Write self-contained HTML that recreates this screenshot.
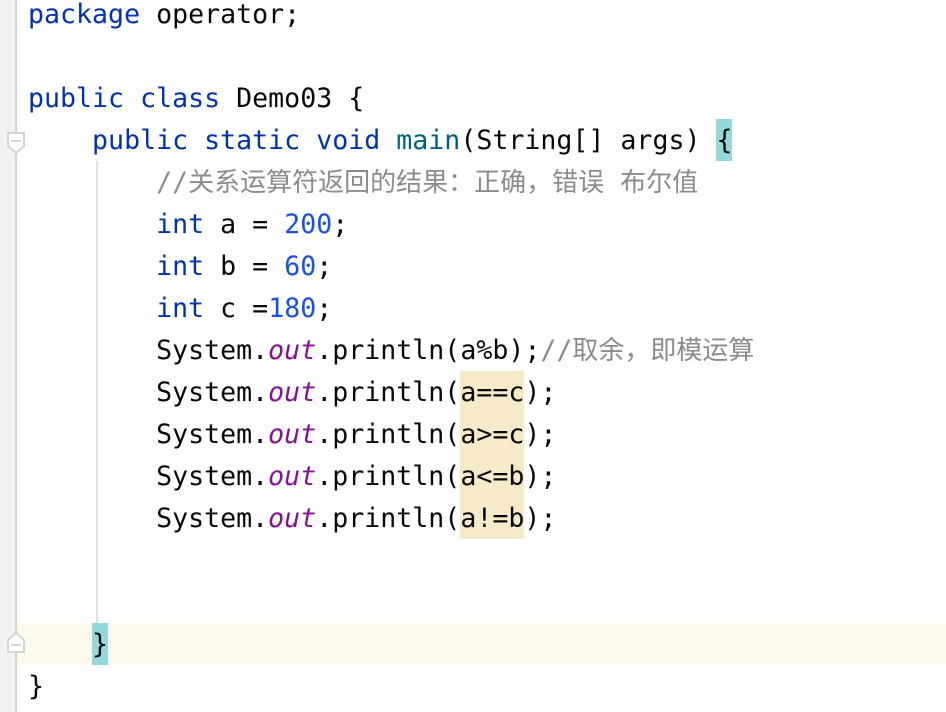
<!DOCTYPE html>
<html><head><meta charset="utf-8">
<style>
html,body{margin:0;padding:0;background:#fff}
#p{position:relative;width:946px;height:712px;overflow:hidden;background:#fff;font-family:"DejaVu Sans Mono","Liberation Mono","Noto Sans CJK SC",monospace;font-size:26.6px;color:#080808}
.a{position:absolute}
.l{position:absolute;left:28px;height:42px;line-height:42px;white-space:pre}
.k{color:#0033b3}.n{color:#1750eb}.m{color:#00627a}.f{color:#871094;font-style:italic}
.c{color:#8c8c8c}
.z{font-family:"Noto Sans CJK SC",sans-serif;font-size:26px;color:#8c8c8c}
</style></head><body><div id="p">
<div class="a" style="left:0;top:623px;width:946px;height:42px;background:#fcfaed"></div>
<div class="a" style="left:0;top:0;width:15px;height:712px;background:#f2f2f2"></div>
<div class="a" style="left:15px;top:0;width:2px;height:712px;background:#d4d4d4"></div>
<div class="a" style="left:96px;top:161px;width:2px;height:462px;background:#e2e2e2"></div>
<div class="a" style="left:716px;top:119px;width:16px;height:42px;background:#93d9d9"></div>
<div class="a" style="left:92px;top:623px;width:16px;height:42px;background:#93d9d9"></div>
<div class="a" style="left:460px;top:371px;width:64px;height:168px;background:#f6ebc8"></div>
<svg class="a" style="left:0;top:0" width="30" height="712">
<path d="M8 133H24V146L16 153L8 146Z" fill="#fff" stroke="#d4d4d4" stroke-width="2"/><path d="M11 141H21" stroke="#d4d4d4" stroke-width="2"/>
<path d="M16 633L24 640V652H8V640Z" fill="#fff" stroke="#d4d4d4" stroke-width="2"/><path d="M11 645H21" stroke="#d4d4d4" stroke-width="2"/>
</svg>
<div class="l" style="top:-6px"><span class="k">package</span> operator;</div>
<div class="l" style="top:78px"><span class="k">public class</span> Demo03 {</div>
<div class="l" style="top:120px">    <span class="k">public static void</span> <span class="m">main</span>(String[] args) {</div>
<div class="l" style="top:160px">        <span class="c">//</span><span class="z">关系运算符返回的结果：正确，错误</span><span class="c"> </span><span class="z">布尔值</span></div>
<div class="l" style="top:204px">        <span class="k">int</span> a = <span class="n">200</span>;</div>
<div class="l" style="top:246px">        <span class="k">int</span> b = <span class="n">60</span>;</div>
<div class="l" style="top:288px">        <span class="k">int</span> c =<span class="n">180</span>;</div>
<div class="l" style="top:328px">        System.<span class="f">out</span>.println(a%b);<span class="c">//</span><span class="z">取余，即模运算</span></div>
<div class="l" style="top:372px">        System.<span class="f">out</span>.println(a==c);</div>
<div class="l" style="top:414px">        System.<span class="f">out</span>.println(a&gt;=c);</div>
<div class="l" style="top:456px">        System.<span class="f">out</span>.println(a&lt;=b);</div>
<div class="l" style="top:498px">        System.<span class="f">out</span>.println(a!=b);</div>
<div class="l" style="top:624px">    }</div>
<div class="l" style="top:666px">}</div>
</div></body></html>
